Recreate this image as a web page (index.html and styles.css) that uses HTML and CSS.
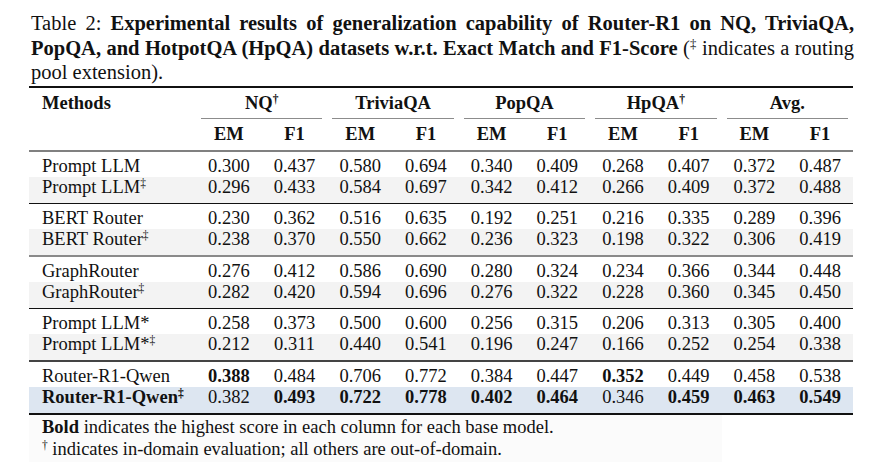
FILE: index.html
```html
<!DOCTYPE html>
<html lang="en">

<head>
    <meta charset="UTF-8">
    <meta name="viewport" content="width=device-width, initial-scale=1.0">
    <title>Table 2 - Router-R1 generalization</title>
    <link rel="stylesheet" href="styles.css">
</head>

<body>
    <div class="page">
        <p class="caption">Table 2: <b>Experimental results of generalization capability of Router-R1 on NQ, TriviaQA, PopQA, and HotpotQA (HpQA) datasets w.r.t. Exact Match and F1-Score</b> (<sup>‡</sup> indicates a routing pool extension).</p>

        <table class="results">
            <colgroup>
                <col class="col-method">
                <col span="10" class="col-num">
            </colgroup>
            <thead>
                <tr class="groups">
                    <th class="method">Methods</th>
                    <th colspan="2" class="group">NQ<sup>†</sup></th>
                    <th colspan="2" class="group">TriviaQA</th>
                    <th colspan="2" class="group">PopQA</th>
                    <th colspan="2" class="group">HpQA<sup>†</sup></th>
                    <th colspan="2" class="group">Avg.</th>
                </tr>
                <tr class="metrics">
                    <th></th>
                    <th>EM</th><th>F1</th>
                    <th>EM</th><th>F1</th>
                    <th>EM</th><th>F1</th>
                    <th>EM</th><th>F1</th>
                    <th>EM</th><th>F1</th>
                </tr>
            </thead>
            <tbody class="sep-black">
                <tr>
                    <td>Prompt LLM</td>
                    <td>0.300</td><td>0.437</td><td>0.580</td><td>0.694</td><td>0.340</td>
                    <td>0.409</td><td>0.268</td><td>0.407</td><td>0.372</td><td>0.487</td>
                </tr>
                <tr class="ext">
                    <td>Prompt LLM<sup>‡</sup></td>
                    <td>0.296</td><td>0.433</td><td>0.584</td><td>0.697</td><td>0.342</td>
                    <td>0.412</td><td>0.266</td><td>0.409</td><td>0.372</td><td>0.488</td>
                </tr>
            </tbody>
            <tbody class="sep-gray">
                <tr>
                    <td>BERT Router</td>
                    <td>0.230</td><td>0.362</td><td>0.516</td><td>0.635</td><td>0.192</td>
                    <td>0.251</td><td>0.216</td><td>0.335</td><td>0.289</td><td>0.396</td>
                </tr>
                <tr class="ext">
                    <td>BERT Router<sup>‡</sup></td>
                    <td>0.238</td><td>0.370</td><td>0.550</td><td>0.662</td><td>0.236</td>
                    <td>0.323</td><td>0.198</td><td>0.322</td><td>0.306</td><td>0.419</td>
                </tr>
            </tbody>
            <tbody class="sep-black">
                <tr>
                    <td>GraphRouter</td>
                    <td>0.276</td><td>0.412</td><td>0.586</td><td>0.690</td><td>0.280</td>
                    <td>0.324</td><td>0.234</td><td>0.366</td><td>0.344</td><td>0.448</td>
                </tr>
                <tr class="ext">
                    <td>GraphRouter<sup>‡</sup></td>
                    <td>0.282</td><td>0.420</td><td>0.594</td><td>0.696</td><td>0.276</td>
                    <td>0.322</td><td>0.228</td><td>0.360</td><td>0.345</td><td>0.450</td>
                </tr>
            </tbody>
            <tbody class="sep-dark">
                <tr>
                    <td>Prompt LLM*</td>
                    <td>0.258</td><td>0.373</td><td>0.500</td><td>0.600</td><td>0.256</td>
                    <td>0.315</td><td>0.206</td><td>0.313</td><td>0.305</td><td>0.400</td>
                </tr>
                <tr class="ext">
                    <td>Prompt LLM*<sup>‡</sup></td>
                    <td>0.212</td><td>0.311</td><td>0.440</td><td>0.541</td><td>0.196</td>
                    <td>0.247</td><td>0.166</td><td>0.252</td><td>0.254</td><td>0.338</td>
                </tr>
            </tbody>
            <tbody class="sep-bottom">
                <tr>
                    <td>Router-R1-Qwen</td>
                    <td><b>0.388</b></td><td>0.484</td><td>0.706</td><td>0.772</td><td>0.384</td>
                    <td>0.447</td><td><b>0.352</b></td><td>0.449</td><td>0.458</td><td>0.538</td>
                </tr>
                <tr class="ours">
                    <td><b>Router-R1-Qwen<sup>‡</sup></b></td>
                    <td>0.382</td><td><b>0.493</b></td><td><b>0.722</b></td><td><b>0.778</b></td><td><b>0.402</b></td>
                    <td><b>0.464</b></td><td>0.346</td><td><b>0.459</b></td><td><b>0.463</b></td><td><b>0.549</b></td>
                </tr>
            </tbody>
        </table>

        <div class="notes">
            <p><b>Bold</b> indicates the highest score in each column for each base model.</p>
            <p><sup>†</sup> indicates in-domain evaluation; all others are out-of-domain.</p>
        </div>
    </div>
</body>

</html>
```

FILE: styles.css
```css
body {
    margin: 0;
    background: #ffffff;
    color: #111111;
    font-family: "Liberation Serif", "Times New Roman", serif;
}

.page {
    padding: 11px 0 0 31px;
    width: 823px;
}

.caption {
    margin: 0 0 1px 0;
    font-size: 20.5px;
    line-height: 24.5px;
    text-align: justify;
}

sup {
    font-size: 0.62em;
    line-height: 0;
    vertical-align: 0.55em;
}

.results {
    width: 824px;
    margin-left: -2px;
    border-collapse: separate;
    border-spacing: 0;
    table-layout: fixed;
    font-size: 18.5px;
}

.col-method {
    width: 167px;
}

.results th,
.results td {
    padding: 0;
    text-align: center;
    white-space: nowrap;
}

.results th:first-child,
.results td:first-child {
    text-align: left;
    padding-left: 13px;
}

/* header */
.groups th {
    height: 31px;
    border-top: 2px solid #111;
    font-weight: bold;
}

.groups .group {
    background: linear-gradient(#8c8c8c, #8c8c8c) no-repeat bottom center / calc(100% - 10px) 1px;
}

.metrics th {
    height: 31px;
    border-bottom: 2px solid #808080;
    font-weight: bold;
}

/* body rows */
.results td {
    line-height: 21px;
}

.results tbody tr:first-child td {
    padding-top: 4px;
}

.results tbody tr:last-child td {
    padding-bottom: 5px;
}

.ext td {
    background: #f3f3f3;
}

.ours td {
    background: #dde6f1;
}

.sep-black tr:last-child td {
    border-bottom: 1px solid #111;
}

.sep-gray tr:last-child td {
    border-bottom: 2px solid #8a8a8a;
}

.sep-dark tr:last-child td {
    border-bottom: 2px solid #444;
}

.sep-bottom tr:last-child td {
    border-bottom: 2px solid #111;
}

/* footnotes */
.notes {
    width: 680px;
    margin-left: -2px;
    padding: 1px 0 2px 13px;
    background: #fbfbfb;
    font-size: 18.5px;
    line-height: 22px;
}

.notes p {
    margin: 0;
}
```
